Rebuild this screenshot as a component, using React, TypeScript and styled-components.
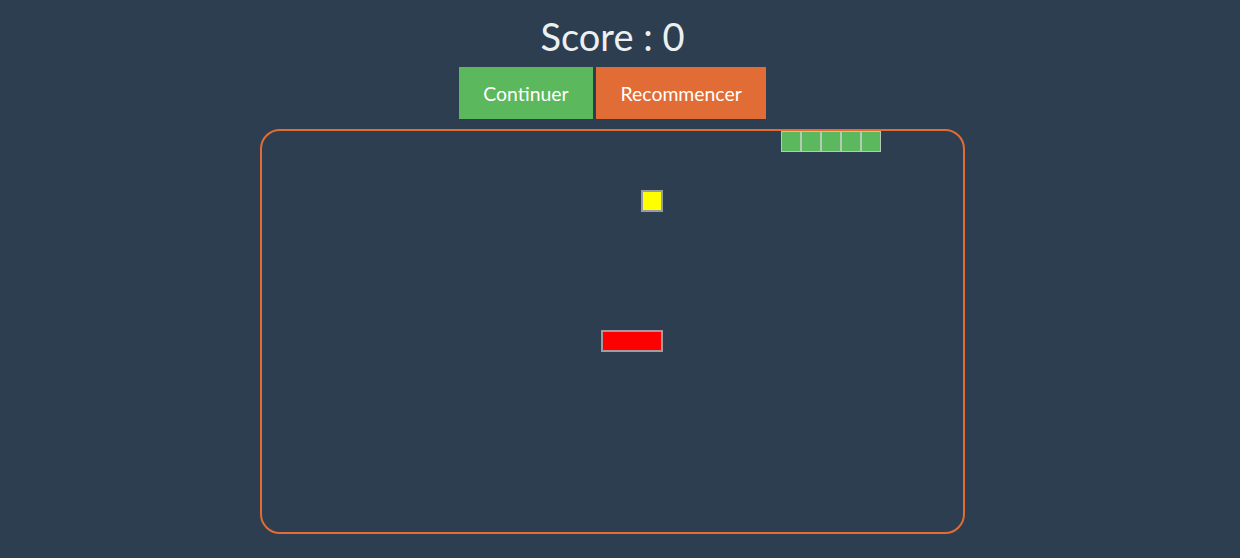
import React from "react";
import styled, { createGlobalStyle } from "styled-components";

const Global = createGlobalStyle`
  html, body {
    margin: 0;
    padding: 0;
    background: #2c3e50;
    font-family: Lato, "Open Sans", sans-serif;
  }
`;

const Page = styled.div`
  width: 1225px;
  height: 558px;
  display: flex;
  flex-direction: column;
  align-items: center;
  box-sizing: border-box;
  padding-top: 12px;
`;

const Score = styled.h1`
  margin: 0;
  font-size: 38px;
  line-height: 48px;
  font-weight: 400;
  color: #ecf0f1;
`;

const Controls = styled.div`
  display: flex;
  gap: 3px;
  margin-top: 7px;
`;

const Button = styled.button<{ $tone: "green" | "orange" }>`
  border: none;
  margin: 0;
  height: 52px;
  padding: 0 24.5px;
  font-family: Lato, sans-serif;
  font-size: 19.4px;
  color: #ffffff;
  background: ${(p) => (p.$tone === "green" ? "#5cb85c" : "#e16c36")};
  cursor: pointer;
`;

const Board = styled.div`
  position: relative;
  margin-top: 10px;
  width: 701px;
  height: 401px;
  border: 2px solid #e16c36;
  border-radius: 20px;
`;

const Cell = styled.div`
  position: absolute;
  box-sizing: border-box;
  width: 20px;
  height: 21px;
  background: #5cb85c;
  border: 1px solid #b2ccb3;
`;

const Food = styled.div`
  position: absolute;
  box-sizing: border-box;
  left: 379px;
  top: 59px;
  width: 22px;
  height: 22px;
  background: #ffff00;
  border: 2px solid #959ca2;
`;

const Obstacle = styled.div`
  position: absolute;
  box-sizing: border-box;
  left: 339px;
  top: 199px;
  width: 62px;
  height: 22px;
  background: #ff0000;
  border: 2px solid #a8999e;
`;

const snake = [0, 1, 2, 3, 4].map((i) => ({ x: 519 + i * 20, y: 0 }));

export default function App() {
  return (
    <>
      <Global />
      <Page>
        <Score>Score : 0</Score>
        <Controls>
          <Button $tone="green">Continuer</Button>
          <Button $tone="orange">Recommencer</Button>
        </Controls>
        <Board>
          {snake.map((c, i) => (
            <Cell key={i} style={{ left: c.x, top: c.y }} />
          ))}
          <Food />
          <Obstacle />
        </Board>
      </Page>
    </>
  );
}
